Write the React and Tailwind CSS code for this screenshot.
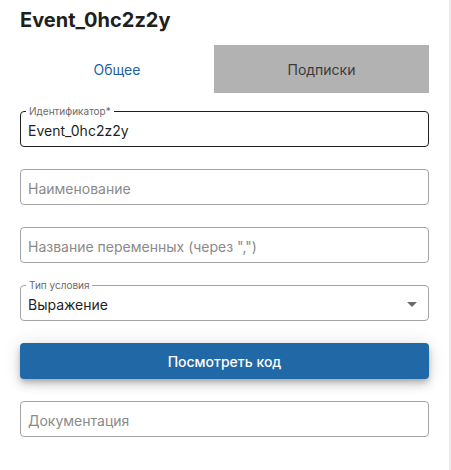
import { useState } from 'react';

// ── Outlined text field ─────────────────────────────────────────────────────
const Field = ({ label, value, placeholder, focused, select }) => (
  <div
    className={`relative h-[36px] rounded-[4px] border flex items-center pl-[7px] pr-[12px] pt-[2px] ${
      focused ? 'border-[#1f1f1f]' : 'border-[#a3a3a3]'
    }`}
  >
    {label && (
      <span className="absolute left-[5px] top-[-7px] bg-white px-[3px] text-[10px] leading-[12px] text-[#6b6b6b]">
        {label}
      </span>
    )}
    {value ? (
      <span className="flex-1 text-[14px] text-[#1f1f1f]">{value}</span>
    ) : (
      <span className="flex-1 text-[14px] text-[#8a8a8a]">{placeholder}</span>
    )}
    {select && (
      <svg viewBox="0 0 10 5" className="w-[10px] h-[5px] mr-[-1px] fill-[#6b6b6b]">
        <path d="M0 0h10L5 5z" />
      </svg>
    )}
  </div>
);

// ── Root App ─────────────────────────────────────────────────────────────────
const App = () => {
  const [tab, setTab] = useState(0);

  return (
    <div
      className="w-[451px] h-[470px] bg-white border-r-2 border-[#ebebeb] pl-[20px] pr-[20px]"
      style={{ fontFamily: 'Inter, "Noto Sans", sans-serif' }}
    >
      <h1 className="pt-[6px] text-[20px] leading-[29px] font-bold text-[#1f1f1f]">Event_0hc2z2y</h1>

      <div className="mt-[10px] grid grid-cols-[194px_215px] h-[48px]">
        <button
          onClick={() => setTab(0)}
          className={`text-[14px] ${tab === 0 ? 'bg-white text-[#1f5fa3]' : 'bg-[#b3b2b2] text-[#3a3a3a]'}`}
        >
          Общее
        </button>
        <button
          onClick={() => setTab(1)}
          className={`text-[14px] ${tab === 1 ? 'bg-white text-[#1f5fa3]' : 'bg-[#b3b2b2] text-[#3a3a3a]'}`}
        >
          Подписки
        </button>
      </div>

      <div className="mt-[18px] flex flex-col gap-[22px]">
        <Field label="Идентификатор*" value="Event_0hc2z2y" focused />
        <Field placeholder="Наименование" />
        <Field placeholder='Название переменных (через ",")' />
        <Field label="Тип условия" value="Выражение" select />
        <button className="h-[36px] rounded-[4px] bg-[#2169a6] text-white text-[14px] font-medium shadow-[0_3px_5px_-1px_rgba(0,0,0,0.2),0_6px_10px_0_rgba(0,0,0,0.14),0_1px_18px_0_rgba(0,0,0,0.12)]">
          Посмотреть код
        </button>
        <Field placeholder="Документация" />
      </div>
    </div>
  );
};

export default App;
